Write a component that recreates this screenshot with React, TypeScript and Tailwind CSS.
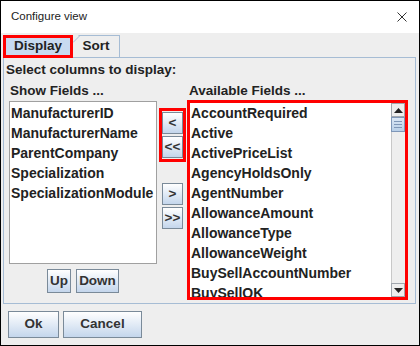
const showFields = [
  "ManufacturerID",
  "ManufacturerName",
  "ParentCompany",
  "Specialization",
  "SpecializationModule",
];

const availableFields = [
  "AccountRequired",
  "Active",
  "ActivePriceList",
  "AgencyHoldsOnly",
  "AgentNumber",
  "AllowanceAmount",
  "AllowanceType",
  "AllowanceWeight",
  "BuySellAccountNumber",
  "BuySellOK",
];

function Btn({ label, className = "" }: { label: string; className?: string }) {
  return (
    <div
      className={`flex items-center justify-center border border-[#7a8a99] bg-gradient-to-b from-white to-[#c4d6ec] text-[13.5px] font-bold text-[#333] ${className}`}
    >
      {label}
    </div>
  );
}

function ScrollArrow({ up }: { up?: boolean }) {
  return (
    <div className="flex h-[14px] w-[14px] shrink-0 items-center justify-center border border-[#a0a6ad] bg-[#eeeeee]">
      <svg width="9" height="5" viewBox="0 0 9 5">
        <path d={up ? "M0 5 L4.5 0 L9 5 Z" : "M0 0 L4.5 5 L9 0 Z"} fill="#222" />
      </svg>
    </div>
  );
}

export default function App() {
  return (
    <div className="flex h-[346px] w-[420px] flex-col border border-black bg-[#eeeeee] font-['Liberation_Sans',Arial,sans-serif] text-[#222]">
      {/* title bar */}
      <div className="flex h-[32px] shrink-0 items-center justify-between bg-white pl-[10px] pr-[12px]">
        <span className="text-[11.5px] text-[#222]">Configure view</span>
        <svg width="10" height="10" viewBox="0 0 10 10">
          <path d="M0.5 0.5 L9.5 9.5 M9.5 0.5 L0.5 9.5" stroke="#333" strokeWidth="1" />
        </svg>
      </div>

      {/* tabs */}
      <div className="flex h-[24px] shrink-0 items-end pl-[2px]">
        <div className="relative z-10 -mb-[1px] flex h-[23px] w-[70px] items-center justify-center border-[3px] border-[#ff0000] bg-[#c8daf0] text-[13.5px] font-bold">
          Display
        </div>
        <div className="relative flex h-[22px] w-[47px] items-center justify-center border-r border-t border-[#a6bcd4] bg-[#eeeeee] text-[13.5px] font-bold [clip-path:polygon(6px_0,100%_0,100%_100%,0_100%,0_6px)]">
          <svg className="absolute left-0 top-0" width="7" height="7" viewBox="0 0 7 7">
            <path d="M0 6.5 L6.5 0" stroke="#a6bcd4" strokeWidth="1" />
          </svg>
          Sort
        </div>
      </div>

      {/* panel */}
      <div className="mx-[2px] flex h-[247px] shrink-0 flex-col border border-[#a6bcd4] w-[413px]">
        <div className="pl-[2px] pt-[4px] text-[13.5px] font-bold leading-[16px]">
          Select columns to display:
        </div>
        <div className="mt-[5px] flex">
          {/* left column */}
          <div className="ml-[5px] flex w-[148px] flex-col">
            <div className="pl-[1px] text-[13.5px] font-bold leading-[16px]">Show Fields ...</div>
            <div className="mt-[2px] h-[163px] border border-[#a0a0a0] bg-white pl-[1px] pt-[1px]">
              {showFields.map((f) => (
                <div key={f} className="h-[20px] text-[14px] font-bold leading-[20px]">
                  {f}
                </div>
              ))}
            </div>
            <div className="mt-[5px] flex justify-center gap-[5px]">
              <Btn label="Up" className="h-[24px] w-[24px]" />
              <Btn label="Down" className="h-[24px] w-[43px]" />
            </div>
          </div>

          {/* middle buttons */}
          <div className="ml-[2px] flex w-[27px] flex-col">
            <div className="mt-[25px] flex h-[54px] flex-col gap-[2px] border-[3px] border-[#ff0000] py-[1px]">
              <Btn label="<" className="h-[22px] w-[21px]" />
              <Btn label="<<" className="h-[22px] w-[21px]" />
            </div>
            <div className="mt-[21px] flex flex-col gap-[2px] pl-[3px]">
              <Btn label=">" className="h-[22px] w-[21px]" />
              <Btn label=">>" className="h-[22px] w-[21px]" />
            </div>
          </div>

          {/* right column */}
          <div className="ml-[1px] flex flex-col">
            <div className="pl-[2px] text-[13.5px] font-bold leading-[16px]">Available Fields ...</div>
            <div className="mt-[1px] flex h-[200px] w-[221px] border-[3px] border-[#ff0000] bg-white">
              <div className="flex-1 overflow-hidden pl-[1px]">
                {availableFields.map((f) => (
                  <div key={f} className="h-[20px] whitespace-nowrap text-[14px] font-bold leading-[20px]">
                    {f}
                  </div>
                ))}
              </div>
              <div className="flex w-[14px] flex-col bg-[#eeeeee]">
                <ScrollArrow up />
                <div className="flex h-[15px] flex-col items-center justify-center gap-[2px] border border-[#7f97b8] bg-gradient-to-b from-[#dbe7f5] to-[#b8cfe8]">
                  <div className="h-px w-[8px] bg-[#7f97b8]" />
                  <div className="h-px w-[8px] bg-[#7f97b8]" />
                  <div className="h-px w-[8px] bg-[#7f97b8]" />
                </div>
                <div className="flex-1 border-l border-[#c8c8c8]" />
                <ScrollArrow />
              </div>
            </div>
          </div>
        </div>
      </div>

      {/* bottom buttons */}
      <div className="mt-[7px] flex gap-[4px] pl-[7px]">
        <Btn label="Ok" className="h-[27px] w-[51px]" />
        <Btn label="Cancel" className="h-[27px] w-[79px]" />
      </div>
    </div>
  );
}
